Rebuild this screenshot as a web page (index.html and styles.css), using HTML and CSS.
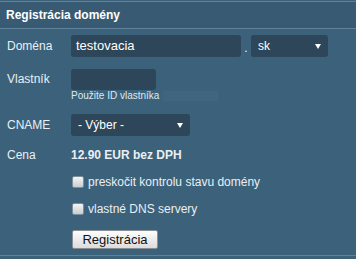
FILE: index.html
```html
<!DOCTYPE html>
<html lang="sk">
<head>
    <meta charset="UTF-8">
    <title>Registrácia domény</title>
    <link rel="stylesheet" href="styles.css">
</head>
<body>
<div class="box">
    <h1>Registrácia domény</h1>
    <div class="form">
        <div class="row">
            <span class="lbl">Doména</span>
            <div class="field">
                <span class="inp name">testovacia</span>
                <span class="dot">.</span>
                <span class="sel tld">sk</span>
            </div>
        </div>
        <div class="row owner">
            <span class="lbl">Vlastník</span>
            <div class="field col">
                <span class="inp short"></span>
                <span class="hint">Použite ID vlastníka<i class="ghost"></i></span>
            </div>
        </div>
        <div class="row cname">
            <span class="lbl">CNAME</span>
            <div class="field">
                <span class="sel pick">- Výber -</span>
            </div>
        </div>
        <div class="row price">
            <span class="lbl">Cena</span>
            <div class="field"><b>12.90 EUR bez DPH</b></div>
        </div>
        <label class="chk first"><input type="checkbox"> preskočit kontrolu stavu domény</label>
        <label class="chk"><input type="checkbox"> vlastné DNS servery</label>
        <button class="btn">Registrácia</button>
    </div>
</div>
</body>
</html>
```

FILE: styles.css
```css
html,body{
    margin:0;
    background:#3c617a;
}
body{
    font-family:"Liberation Sans",Arial,sans-serif;
    font-size:12px;
    color:#e9eff4;
}
.box{
    width:356px;
    height:259px;
    box-sizing:border-box;
    padding-top:1px;
}
h1{
    margin:0;
    height:26px;
    line-height:26px;
    padding-left:6px;
    font-size:12px;
    font-weight:bold;
    color:#fff;
    background:#385a73;
    border-top:1px solid #5f8299;
    border-bottom:1px solid #5f8299;
}
.form{
    height:227px;
    border-bottom:1px solid #5f8299;
    padding-top:6px;
    box-sizing:border-box;
}
.row{
    display:flex;
    align-items:flex-start;
}
.lbl{
    width:64px;
    padding-left:7px;
    flex:none;
    line-height:22px;
}
.field{
    display:flex;
    align-items:center;
}
.field.col{
    flex-direction:column;
    align-items:flex-start;
}
.inp,.sel{
    display:block;
    box-sizing:border-box;
    height:22px;
    line-height:22px;
    background:#2d4659;
    border-radius:3px;
    color:#fff;
}
.name{
    width:170px;
    padding-left:5px;
    font-size:13px;
}
.dot{
    width:10px;
    text-align:center;
    padding-top:4px;
}
.sel{
    position:relative;
    padding-left:7px;
}
.sel:after{
    content:"";
    position:absolute;
    right:7px;
    top:9px;
    border-left:3.5px solid transparent;
    border-right:3.5px solid transparent;
    border-top:5px solid #fff;
}
.tld{
    width:77px;
    font-size:12px;
}
.pick{
    width:119px;
}
.owner{
    margin-top:12px;
}
.owner .lbl{
    line-height:21px;
}
.short{
    width:85px;
    height:21px;
}
.hint{
    display:flex;
    align-items:center;
    font-size:10px;
    line-height:11px;
    color:#dfe8ef;
}
.ghost{
    display:block;
    width:55px;
    height:10px;
    margin-left:4px;
    background:#40657e;
}
.cname{
    margin-top:13px;
}
.price{
    margin-top:8px;
}
.price .field{
    line-height:22px;
}
.chk{
    display:flex;
    align-items:center;
    margin-left:72px;
    height:16px;
    margin-top:11px;
}
.chk.first{
    margin-top:8px;
}
.chk input{
    appearance:none;
    width:12px;
    height:12px;
    margin:0 4px 0 0;
    border:1px solid #7d8f9c;
    border-radius:2px;
    background:linear-gradient(#f4f4f4,#c9cdd0);
    box-sizing:border-box;
}
.btn{
    display:block;
    margin:13px 0 0 72px;
    width:86px;
    height:19px;
    padding:0;
    font-family:"Liberation Sans",Arial,sans-serif;
    font-size:13px;
    color:#111;
    border:1px solid #8a8f94;
    border-radius:2px;
    background:linear-gradient(#fdfdfd,#dcdcdc);
}
```
